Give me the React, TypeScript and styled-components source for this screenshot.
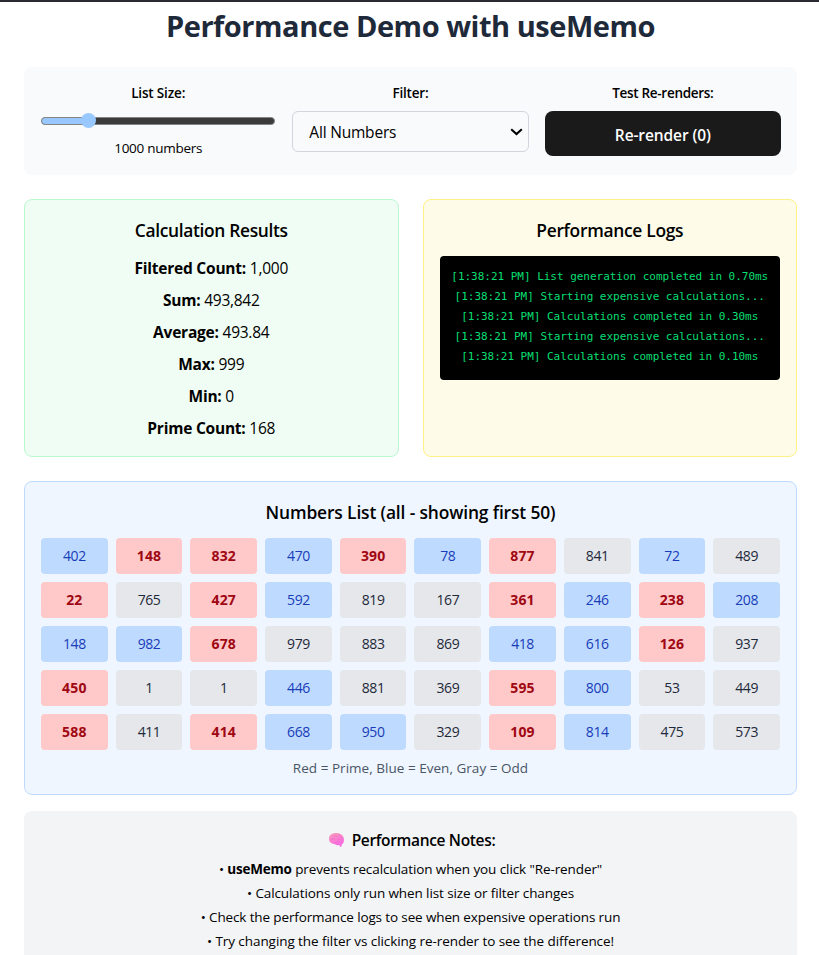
import React, { useState } from 'react';
import styled, { createGlobalStyle } from 'styled-components';

const GlobalStyle = createGlobalStyle`
  *, *::before, *::after { box-sizing: border-box; margin: 0; padding: 0; }
  body {
    height: 955px;
    overflow: hidden;
    background: #fff;
    color: #000;
    font-family: "Segoe UI", "Open Sans", "Noto Sans", sans-serif;
  }
`;

const Page = styled.main`
  height: 955px;
  overflow: hidden;
  border-top: 2px solid #2b2a33;
  padding: 6px 22px 0 24px;
  text-align: center;
`;

const Title = styled.h1`
  font-size: 29px;
  font-weight: 700;
  line-height: 36px;
  letter-spacing: -0.46px;
  color: #1e2939;
  margin-bottom: 23px;
`;

const Controls = styled.section`
  display: grid;
  grid-template-columns: repeat(3, 1fr);
  gap: 16px;
  height: 108px;
  padding: 16px;
  margin-bottom: 24px;
  border-radius: 8px;
  background: #f9fafb;
`;

const Control = styled.div`
  display: flex;
  flex-direction: column;
`;

const Label = styled.label<{ $tracking?: number }>`
  font-size: 13.5px;
  font-weight: 600;
  line-height: 20px;
  letter-spacing: ${(p) => p.$tracking ?? 0}px;
  margin-bottom: 8px;
`;

const Slider = styled.div`
  display: grid;
  align-items: center;
  height: 19px;
  margin-bottom: 8px;
  > * { grid-area: 1 / 1; }
`;

const SliderTrack = styled.div`
  height: 8px;
  margin: 0 1px;
  border: 1px solid #858585;
  border-radius: 4px;
  overflow: hidden;
  background: #3b3b3b;
`;

const SliderFill = styled.div`
  height: 100%;
  background: #99c8ff;
`;

const SliderInput = styled.input`
  appearance: none;
  width: 100%;
  height: 16px;
  background: transparent;
  &::-webkit-slider-thumb {
    appearance: none;
    width: 15px;
    height: 15px;
    border-radius: 50%;
    background: #99c8ff;
  }
`;

const SliderValue = styled.div`
  font-size: 13.5px;
  line-height: 20px;
  letter-spacing: -0.28px;
`;

const SelectBox = styled.div`
  display: grid;
  align-items: center;
  height: 41px;
  > * { grid-area: 1 / 1; }
`;

const Select = styled.select`
  appearance: none;
  width: 100%;
  height: 41px;
  padding: 1px 16px 0;
  border: 1px solid #d1d5dc;
  border-radius: 6px;
  background: transparent;
  color: #000;
  font: inherit;
  font-size: 15.5px;
  letter-spacing: -0.2px;
`;

const Chevron = styled.svg`
  justify-self: end;
  width: 13px;
  height: 8px;
  margin-right: 6px;
  pointer-events: none;
`;

const RenderButton = styled.button`
  height: 45px;
  border: 0;
  border-radius: 8px;
  padding-top: 2px;
  background: #1a1a1a;
  color: #fff;
  font: inherit;
  font-size: 15.5px;
  font-weight: 600;
  letter-spacing: -0.1px;
`;

const CardRow = styled.div`
  display: grid;
  grid-template-columns: 1fr 1fr;
  gap: 24px;
  margin-bottom: 24px;
`;

const tones = {
  green: ['#f0fdf4', '#b9f8cf'],
  yellow: ['#fefce8', '#fff085'],
  blue: ['#eff6ff', '#bedbff'],
};

const Card = styled.section<{ $tone: keyof typeof tones }>`
  min-width: 0;
  padding: 16px;
  border: 1px solid ${(p) => tones[p.$tone][1]};
  border-radius: 8px;
  background: ${(p) => tones[p.$tone][0]};
`;

const CardTitle = styled.h2<{ $tracking?: number }>`
  font-size: 17.4px;
  font-weight: 600;
  line-height: 28px;
  letter-spacing: ${(p) => p.$tracking ?? 0}px;
  margin-bottom: 12px;
`;

const Stats = styled.div`
  display: grid;
  gap: 8px;
`;

const Stat = styled.div`
  font-size: 15.5px;
  line-height: 24px;
  letter-spacing: -0.25px;
  strong { letter-spacing: -0.22px; }
`;

const LogPanel = styled.div`
  height: 124px;
  padding: 13px 0 0;
  border-radius: 4px;
  background: #000;
  color: #05df72;
  font-family: "DejaVu Sans Mono", monospace;
  font-size: 11px;
  letter-spacing: -0.02px;
  white-space: nowrap;
`;

const LogLine = styled.div`
  line-height: 16px;
  margin-bottom: 4px;
`;

const NumberGrid = styled.div`
  display: grid;
  grid-template-columns: repeat(10, 1fr);
  gap: 8px;
`;

const kinds = {
  prime: ['#ffc9c9', '#9f0712'],
  even: ['#bedbff', '#193cb8'],
  odd: ['#e5e7eb', '#1e2939'],
};

const NumberCell = styled.div<{ $kind: keyof typeof kinds }>`
  padding: 8px;
  border-radius: 4px;
  background: ${(p) => kinds[p.$kind][0]};
  color: ${(p) => kinds[p.$kind][1]};
  font-size: 14px;
  font-weight: ${(p) => (p.$kind === 'prime' ? 700 : 400)};
  letter-spacing: ${(p) => (p.$kind === 'prime' ? 0.15 : -0.4)}px;
  line-height: 20px;
`;

const Legend = styled.p`
  margin-top: 8px;
  color: #4a5565;
  font-size: 13.5px;
  line-height: 20px;
  letter-spacing: 0.03px;
`;

const Notes = styled.section`
  margin-top: 16px;
  padding: 16px;
  border-radius: 8px;
  background: #f3f4f6;
`;

const NotesTitle = styled.h3`
  display: flex;
  align-items: center;
  justify-content: center;
  gap: 7px;
  padding: 1px 0 0 2px;
  margin-bottom: 7px;
  font-size: 15.5px;
  font-weight: 600;
  line-height: 24px;
  letter-spacing: -0.33px;
`;

const BrainIcon = styled.svg`
  width: 17px;
  height: 16px;
`;

const NoteList = styled.ul`
  display: grid;
  gap: 4px;
  list-style: none;
  font-size: 13.5px;
  line-height: 20px;
`;

const Note = styled.li<{ $tracking: number }>`
  letter-spacing: ${(p) => p.$tracking}px;
  strong { letter-spacing: -0.2px; }
`;

const stats = [
  ['Filtered Count:', '1,000'],
  ['Sum:', '493,842'],
  ['Average:', '493.84'],
  ['Max:', '999'],
  ['Min:', '0'],
  ['Prime Count:', '168'],
];

const logs = [
  'List generation completed in 0.70ms',
  'Starting expensive calculations...',
  'Calculations completed in 0.30ms',
  'Starting expensive calculations...',
  'Calculations completed in 0.10ms',
];

const numbers = [
  402, 148, 832, 470, 390, 78, 877, 841, 72, 489,
  22, 765, 427, 592, 819, 167, 361, 246, 238, 208,
  148, 982, 678, 979, 883, 869, 418, 616, 126, 937,
  450, 1, 1, 446, 881, 369, 595, 800, 53, 449,
  588, 411, 414, 668, 950, 329, 109, 814, 475, 573,
];

const highlighted = new Set([1, 2, 4, 6, 10, 12, 16, 18, 22, 28, 30, 36, 40, 42, 46]);

const kindOf = (n: number, i: number): keyof typeof kinds =>
  highlighted.has(i) ? 'prime' : n % 2 === 0 ? 'even' : 'odd';

export default function App() {
  const [size, setSize] = useState(1000);
  const [renders, setRenders] = useState(0);
  const [filter, setFilter] = useState('all');

  return (
    <>
      <GlobalStyle />
      <Page>
        <Title>Performance Demo with useMemo</Title>

        <Controls>
          <Control>
            <Label $tracking={-0.16}>List Size:</Label>
            <Slider>
              <SliderTrack>
                <SliderFill style={{ width: `${((size - 100) / 4900) * 94 + 3}%` }} />
              </SliderTrack>
              <SliderInput
                type="range"
                min={100}
                max={5000}
                step={100}
                value={size}
                onChange={(e) => setSize(Number(e.target.value))}
              />
            </Slider>
            <SliderValue>{size} numbers</SliderValue>
          </Control>
          <Control>
            <Label $tracking={-0.2}>Filter:</Label>
            <SelectBox>
              <Select value={filter} onChange={(e) => setFilter(e.target.value)}>
                <option value="all">All Numbers</option>
                <option value="even">Even Numbers</option>
                <option value="odd">Odd Numbers</option>
                <option value="prime">Prime Numbers</option>
              </Select>
              <Chevron viewBox="0 0 13 8">
                <path d="M1.2 1.2 L6.5 6 L11.8 1.2" fill="none" stroke="#000" strokeWidth="2.1" />
              </Chevron>
            </SelectBox>
          </Control>
          <Control>
            <Label $tracking={-0.3}>Test Re-renders:</Label>
            <RenderButton onClick={() => setRenders(renders + 1)}>Re-render ({renders})</RenderButton>
          </Control>
        </Controls>

        <CardRow>
          <Card $tone="green">
            <CardTitle $tracking={-0.34}>Calculation Results</CardTitle>
            <Stats>
              {stats.map(([name, value]) => (
                <Stat key={name}>
                  <strong>{name}</strong> {value}
                </Stat>
              ))}
            </Stats>
          </Card>
          <Card $tone="yellow">
            <CardTitle $tracking={-0.3}>Performance Logs</CardTitle>
            <LogPanel>
              {logs.map((log, i) => (
                <LogLine key={i}>[1:38:21 PM] {log}</LogLine>
              ))}
            </LogPanel>
          </Card>
        </CardRow>

        <Card $tone="blue">
          <CardTitle $tracking={-0.14}>Numbers List ({filter} - showing first 50)</CardTitle>
          <NumberGrid>
            {numbers.map((n, i) => (
              <NumberCell key={i} $kind={kindOf(n, i)}>
                {n}
              </NumberCell>
            ))}
          </NumberGrid>
          <Legend>Red = Prime, Blue = Even, Gray = Odd</Legend>
        </Card>

        <Notes>
          <NotesTitle>
            <BrainIcon viewBox="0 0 17 16">
              <defs>
                <linearGradient id="brain" x1="0" y1="0" x2="0.4" y2="1">
                  <stop offset="0" stopColor="#f5a3b8" />
                  <stop offset="0.55" stopColor="#fb7fd0" />
                  <stop offset="1" stopColor="#fa6be4" />
                </linearGradient>
              </defs>
              <path
                d="M1 7.6 C0.6 3.6 3.4 1.1 8 1.1 C12.6 1.1 16 3.6 16 8 C16 10.3 15.2 11.7 13.9 12.4 L13.4 14.6 L12.3 14.9 L11.2 13 C9.6 13.4 7.8 13 6.6 11.9 C4 12.2 1.4 11 1 7.6 Z"
                fill="url(#brain)"
              />
              <path
                d="M3 8 C4 6.4 5.8 6.2 7 7.2 M5 4.2 C6.6 3.2 8.2 3.6 9 4.8 M10.6 3.6 C12.4 4 13.4 5.2 13.6 6.6 M6.9 11 C7.4 10 9.4 9.6 11 10 M9.6 7 C11.4 6.8 13 7.8 13.6 9.4"
                fill="none"
                stroke="#ec62c4"
                strokeWidth="0.55"
                strokeLinecap="round"
              />
            </BrainIcon>
            Performance Notes:
          </NotesTitle>
          <NoteList>
            <Note $tracking={-0.1}>
              • <strong>useMemo</strong> prevents recalculation when you click "Re-render"
            </Note>
            <Note $tracking={-0.1}>• Calculations only run when list size or filter changes</Note>
            <Note $tracking={-0.13}>• Check the performance logs to see when expensive operations run</Note>
            <Note $tracking={-0.07}>• Try changing the filter vs clicking re-render to see the difference!</Note>
          </NoteList>
        </Notes>
      </Page>
    </>
  );
}
